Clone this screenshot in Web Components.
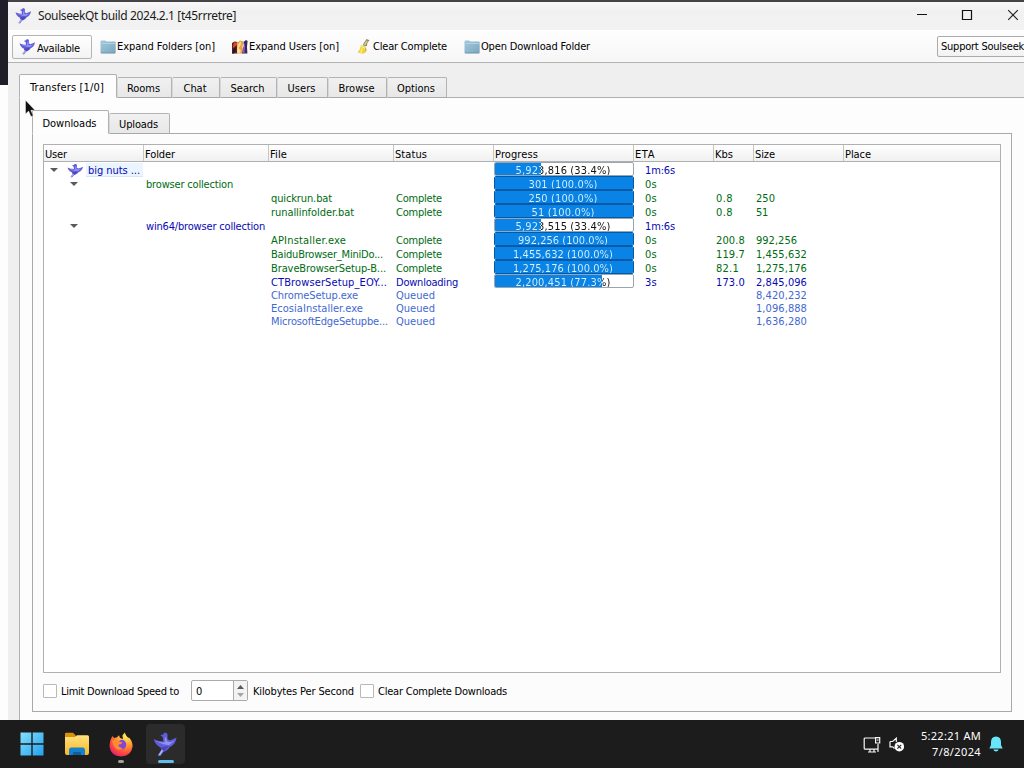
<!DOCTYPE html>
<html lang="en">
<head>
<meta charset="utf-8">
<title>SoulseekQt</title>
<style>
html,body{margin:0;width:1024px;height:768px;overflow:hidden;background:#fff}
body{font:11px/14px "DejaVu Sans Condensed","DejaVu Sans",sans-serif;font-stretch:condensed;color:#000}
</style>
</head>
<body>
<slsk-desktop></slsk-desktop>
<script>
const define = (name, html, extra) => {
  const t = document.createElement('template');
  t.innerHTML = html;
  customElements.define(name, class extends HTMLElement {
    constructor() {
      super();
      this.attachShadow({mode: 'open'}).append(t.content.cloneNode(true));
    }
    connectedCallback() { if (extra) extra(this, this.shadowRoot); }
  });
};

// Text run tracked to a given width
define('fit-text', `<style>:host{display:inline-block;white-space:pre;flex:none}</style><slot></slot>`, el => {
  const w = +el.getAttribute('w');
  const n = el.textContent.length;
  if (w && n) {
    el.style.letterSpacing = '0';
    const now = el.getBoundingClientRect().width;
    if (now) el.style.letterSpacing = ((w - now) / n).toFixed(4) + 'px';
  }
});

const BIRD = `<path d="M.5 5.2C3 6.6 5 6.7 7 6.8L6.6 3.9 4.9 2.9 6.8 2.3C7.3.9 9.5.7 9.9 2.3L9.8 5.3 11.4 6.2C13 5.4 14.7 5 16 4.2 15.5 7.6 13.7 9.6 11.4 10.4 10.6 12.3 8.5 13 7.2 13.6L5 16.4 3.4 16 5.8 12.6C5.6 11.4 5.3 10.8 4.5 10.4 2.9 9.5 1 8 .5 5.2Z" fill="#5f5bdb"/><path d="M1.5 6.5 7 8.7 11 9.3 15 6 12 7.3 9.4 6.7 9 3.5 8 5 8 7.6 5 7.2Z" fill="#8e92f2"/><path d="M5 11 8 10.3 11 9.8 8 12.6 6.3 13.2Z" fill="#4a45b0"/><path d="M6 12 7 13 4.8 16 3.5 15.8Z" fill="#a9acf3"/>`;
const ICONS = {
  bird: ['0 0 17 17', BIRD],
  folder: ['0 0 16 14', `<defs><linearGradient id="g" x2="1" y2="1"><stop stop-color="#a3c8dc"/><stop offset="1" stop-color="#7ba6bf"/></linearGradient></defs><path d="M.5 1.5Q.5.5 1.5.5H5L6.5 1.5H15Q15.7 1.5 15.7 2.5V12.5Q15.7 13.5 14.7 13.5H1.5Q.5 13.5.5 12.5Z" fill="url(#g)"/><path d="M2 3H15V4H2Z" fill="#b3d3e3"/><path d="M1 12.8H15" stroke="#6a98b2" stroke-width=".8"/>`],
  users: ['0 0 16 14', `<path d="M0 3 2.5 1.5 5.5 2 5 7 6 13.5H0Z" fill="#5d211b"/><path d="M2 2.4H5V5L1 8V6Z" fill="#d44d28"/><path d="M1 9 4 7 4 11 2 13.5H0Z" fill="#2a1830"/><path d="M5.5 2.5 8 .5 11.5 1.5 10.5 7 11 13.5H5Z" fill="#eda243"/><path d="M7 3 9 1.5 8.6 5 6.5 8 9 11 7 13.5H5.2V9Z" fill="#ffe19a"/><path d="M11.5 2 14 0 15.6 1 15 7 15.4 13.5H10L12 7Z" fill="#33256e"/><path d="M10.5 9 13 3 13 8 12.5 13 10.5 13.5Z" fill="#8a5aa8"/>`],
  broom: ['0 0 13 16', `<path d="M9.5 0 12.5 1.2 10.3 4.3 10 7.5 6.8 8 6 5.7Z" fill="#8d8d5e"/><path d="M9.3 1.8 10.6 2.2 8.3 7 6.8 6.3Z" fill="#d7cf8d"/><path d="M4 6.5 9.2 9 8.7 14.5 6 15.8.5 14.5Q3.5 11.5 4 6.5Z" fill="#eed33d"/><path d="M4.5 8 8 10M3 13 5 14.5M5 10 4.5 13" stroke="#fff5a0" fill="none"/><path d="M8 9.5 9.5 11 9 14Z" fill="#b4992d"/>`],
  min: ['0 0 12 12', `<path d="M1 5.5H11" stroke="#111" fill="none"/>`],
  max: ['0 0 12 12', `<path d="M1.5 1.5H10.5V10.5H1.5Z" stroke="#111" stroke-width="1.2" fill="none"/>`],
  close: ['0 0 12 12', `<path d="M1.2 1.2 10.8 10.8M10.8 1.2 1.2 10.8" stroke="#222" stroke-width="1.15" fill="none"/>`],
  down: ['0 0 8 4', `<path d="M0 0H8L4 4Z" fill="#5a5a5a"/>`],
  pointer: ['0 0 10 17', `<path d="M.5.3V14L3.6 11 6 16.5 8.2 15.5 5.8 10.3H10Z" fill="#111" stroke="#fff" stroke-width=".4"/>`],
  win: ['0 0 24 24', `<defs><linearGradient id="h" gradientUnits="userSpaceOnUse" x1="0" y1="0" x2="24" y2="24"><stop stop-color="#86e2fd"/><stop offset="1" stop-color="#219fed"/></linearGradient></defs><path d="M.5.5H11.3V11.3H.5ZM12.7.5H23.5V11.3H12.7ZM.5 12.7H11.3V23.5H.5ZM12.7 12.7H23.5V23.5H12.7Z" fill="url(#h)"/>`],
  explorer: ['0 0 26 24', `<defs><linearGradient id="g" x2="0" y2="1"><stop stop-color="#ffe17c"/><stop offset="1" stop-color="#f7b72c"/></linearGradient></defs><path d="M1 2Q1 .7 2.3.7H9L12 3.7V8H1Z" fill="#d8920e"/><path d="M1 5H11L13 3.2H23.5Q25 3.2 25 4.7V21Q25 23 23 23H3Q1 23 1 21Z" fill="url(#g)"/><path d="M5 23V18Q5 15.5 7.5 15.5H18.5Q21 15.5 21 18V23Z" fill="#1681cb"/><path d="M9 23V21Q9 20 10 20H16Q17 20 17 21V23Z" fill="#105c9c"/>`],
  firefox: ['0 0 24 25', `<defs><radialGradient id="g" cx=".72" cy=".15" r=".95"><stop stop-color="#fff15a"/><stop offset=".4" stop-color="#ff9f31"/><stop offset=".75" stop-color="#ff493c"/><stop offset="1" stop-color="#df1c77"/></radialGradient></defs><path d="M3.5 4 5 6 8 5.3 10 3.2 11 6 14 7 13.4 3.5 15.7.5Q17 4 19 5.5L20.5 6Q24 10 23.5 15 22 24 12 24.5 2 24 .6 15 .3 9 3.5 4Z" fill="url(#g)"/><path d="M8.2 10 11 8.6Q13 7 15.5 8.7 18 11 17 14.5 15 18.5 11.5 17.5 8 17 7.7 13Z" fill="#8446d4"/><path d="M3 9Q6 7 9 9L13.5 10.4Q12 12.7 9.5 12.6 9.5 16 14 16.2 10 19.5 6.2 16Q4 13 3 9Z" fill="#ff8b35"/>`],
  net: ['0 0 18 17', `<path d="M12 2H2.2Q1.2 2 1.2 3V12.3Q1.2 13.2 2.2 13.2H15M5 16H13M7 13V16M11 13V16M15 8V16" fill="none" stroke="#f5f5f5" stroke-width="1.2"/><path d="M12.6 1.6H16.7V7H12.6ZM13.8 4H15.7" fill="none" stroke="#f5f5f5" stroke-width="1.2"/>`],
  mute: ['0 0 16 15', `<path d="M1 4.5H3.6L7.3 1.2V5M1 4.5V9.8H3.7L5.5 11.5" fill="none" stroke="#f5f5f5" stroke-width="1.2"/><circle cx="10.3" cy="9.7" r="4.8" fill="#fff"/><path d="M8.4 7.8 12.2 11.6M12.2 7.8 8.4 11.6" stroke="#222" stroke-width="1.1"/>`],
  bell: ['0 0 14 16', `<path d="M7 .5Q12 .8 12 6V9L13.7 12.5H.3L2 9V6Q2 .8 7 .5Z" fill="#69e6fb"/><path d="M4.3 13.5H9.7Q9 15.5 7 15.5 5 15.5 4.3 13.5Z" fill="#69e6fb"/>`]
};
define('ui-icon', `<style>:host{display:block;flex:none}svg{display:block;width:100%;height:100%}</style>`, (el, root) => {
  const [box, body] = ICONS[el.getAttribute('name')];
  el.style.width = el.getAttribute('w') + 'px';
  el.style.height = el.getAttribute('h') + 'px';
  root.innerHTML += `<svg viewBox="${box}" preserveAspectRatio="none">${body}</svg>`;
});

define('title-bar', `<style>
:host{display:flex;align-items:center;height:28px;box-sizing:border-box;background:linear-gradient(#f8f8f8,#f2f1f2 30%,#f2f2f2);padding:0 0 2px 7px;font:12px/16px "Noto Sans","Open Sans",sans-serif;color:#1b1b1b}
.name{margin-left:6px;flex:none;width:880px;padding-top:1px}
</style><ui-icon name="bird" w="17" h="17"></ui-icon><div class="name"><fit-text w="198">SoulseekQt build 2024.2.1 [t45rrretre]</fit-text></div>
<ui-icon name="min" w="12" h="12" style="margin-left:-2px"></ui-icon><ui-icon name="max" w="12" h="12" style="margin-left:33px"></ui-icon><ui-icon name="close" w="12" h="12" style="margin-left:34px"></ui-icon>`);

define('tool-bar', `<style>
:host{display:flex;align-items:center;height:32px;background:linear-gradient(#fefefe,#f6f6f6);border-bottom:1px solid #b2b2b2;box-shadow:inset 0 -1px #f9f9f9;padding-left:4px;overflow:hidden}
.on{box-sizing:border-box;display:flex;align-items:center;width:80px;height:24px;border:1px solid #b4b4b4;border-radius:2px;background:linear-gradient(#fff,#f3f3f3);padding-left:6px;margin-top:2px;flex:none}
.on fit-text{margin:3px 0 0 1px}
.on ui-icon{margin-top:-1px}
.i{display:flex;align-items:center;gap:1px;flex:none;padding-top:1px}
.i fit-text{padding-top:1px}
.sup{box-sizing:border-box;width:110px;height:21px;border:1px solid #aaa;border-radius:2px;background:linear-gradient(#fff,#f2f2f2);padding:3px 0 0 3px;flex:none}
</style>
<div class="on"><ui-icon name="bird" w="17" h="17"></ui-icon><fit-text w="43">Available</fit-text></div>
<div class="i" style="width:132px;margin-left:8px"><ui-icon name="folder" w="16" h="14"></ui-icon><fit-text w="98">Expand Folders [on]</fit-text></div>
<div class="i" style="width:125px"><ui-icon name="users" w="16" h="14"></ui-icon><fit-text w="90">Expand Users [on]</fit-text></div>
<div class="i" style="width:107px;gap:3px"><ui-icon name="broom" w="13" h="15"></ui-icon><fit-text w="74">Clear Complete</fit-text></div>
<div class="i" style="width:473px"><ui-icon name="folder" w="16" h="14"></ui-icon><fit-text w="109">Open Download Folder</fit-text></div>
<div class="sup"><fit-text w="83">Support Soulseek</fit-text></div>`);

define('tab-strip', `<style>
:host{display:flex;align-items:flex-end;position:relative;z-index:1;margin-bottom:-1px;flex:none}
</style><slot></slot>`);
define('tab-item', `<style>
:host{display:flex;flex:none;justify-content:center;align-items:center;box-sizing:border-box;width:var(--w);height:21px;border:1px solid #b3b3b3;border-left-color:#d8d8d8;border-bottom:1px solid #a8a8a8;background:linear-gradient(#f1f1f1,#e7e7e7);border-radius:2px 2px 0 0;padding:3px 2px 0 0}
:host([on]){height:24px;background:#fdfdfd;border-color:#b0b0b0;border-bottom-color:#fdfdfd;padding:3px 2px 0 0}
</style><slot></slot>`);

define('progress-cell', `<style>
:host{display:block;box-sizing:border-box;width:140px;height:14px;border:1px solid #9aa5ae;border-radius:2px;background:#fff;overflow:hidden}
.bar{height:12px;background:linear-gradient(90deg,#0a83e6 var(--x),transparent var(--x))}
:host([full]){border-color:#0859a5}
.t{display:block;text-align:center;line-height:15px;height:14px;color:transparent;padding-right:2px;-webkit-background-clip:text;background-clip:text;background-image:linear-gradient(90deg,#d8f3ff var(--x),#111 var(--x))}
</style><div class="bar"><div class="t"></div></div>`, (el, root) => {
  const p = el.getAttribute('p');
  const t = root.querySelector('.t');
  el.style.setProperty('--x', p + '%');
  if (p === '100.0') el.toggleAttribute('full', true);
  t.textContent = `${el.getAttribute('n')} (${p}%)`;
  const w = +el.getAttribute('w');
  const r = document.createRange();
  r.selectNodeContents(t);
  t.style.letterSpacing = ((w - r.getBoundingClientRect().width) / t.textContent.length).toFixed(4) + 'px';
});

// user, folder, file, status, [count, percent, width], eta, kbs, size, colour
const G = '#006b12', B = '#0808b4', Q = '#3f68d2';
const ROWS = [
  ['big nuts ...|52','','','',['5,923,816','33.4',95],'1m:6s|30','','',B],
  ['>','browser collection|87','','',['301','100.0',69],'0s|12','','',G],
  ['','','quickrun.bat|61','Complete|46',['250','100.0',69],'0s|12','0.8|17','250|19',G],
  ['','','runallinfolder.bat|83','Complete|46',['51','100.0',63],'0s|12','0.8|17','51|12',G],
  ['>','win64/browser collection|119','','',['5,923,515','33.4',95],'1m:6s|30','','',B],
  ['','','APInstaller.exe|75','Complete|46',['992,256','100.0',90],'0s|12','200.8|29','992,256|41',G],
  ['','','BaiduBrowser_MiniDo...|112','Complete|46',['1,455,632','100.0',100],'0s|12','119.7|29','1,455,632|51',G],
  ['','','BraveBrowserSetup-B...|115','Complete|46',['1,275,176','100.0',100],'0s|12','82.1|23','1,275,176|51',G],
  ['','','CTBrowserSetup_EOY...|116','Downloading|62',['2,200,451','77.3',95],'3s|12','173.0|29','2,845,096|51',B],
  ['','','ChromeSetup.exe|87','Queued|39',null,'','','8,420,232|51',Q],
  ['','','EcosiaInstaller.exe|92','Queued|39',null,'','','1,096,888|51',Q],
  ['','','MicrosoftEdgeSetupbe...|117','Queued|39',null,'','','1,636,280|51',Q]
];
const fit = s => { if (!s) return ''; const [a, w] = s.split('|'); return `<fit-text w="${w}">${a}</fit-text>`; };
const user = s => s === '>' ? `<ui-icon name="down" w="8" h="4" style="margin:4px 0 0 26px"></ui-icon>`
  : s ? `<ui-icon name="down" w="8" h="4" style="margin:4px 0 0 6px"></ui-icon><ui-icon name="bird" w="17" h="15" style="margin:-1px 0 0 9px"></ui-icon><span class="sel">${fit(s)}</span>` : '';
const COLS = ['User|22','Folder|30','File|17','Status|32','Progress|43','ETA|20','Kbs|18','Size|20','Place|26'];

define('transfer-tree', `<style>
:host{display:block;box-sizing:border-box;height:529px;border:1px solid #b0b0b0;background:#fff;flex:none}
.head,.row{display:grid;grid-template-columns:99px 125px 125px 100px 140px 80px 40px 90px 1fr}
.head{height:16px;background:linear-gradient(#fff,#f0f0f0);border-bottom:1px solid #b0b0b0}
.head div{box-sizing:border-box;border-left:1px solid #c6c6c6;padding:3px 0 0 1px;height:16px}
.head div:first-child{border:0}
.row{height:14px;line-height:14px}
.row.q{height:13px;line-height:13px}
.row>div{padding:2px 0 0 3px;white-space:nowrap;height:14px;box-sizing:border-box}
.row.q>div{padding-top:1px}
.row>div:first-child{display:flex;padding-left:0}
.row>.p{padding:0 0 0 1px}
.row>.e{padding-left:12px}
.sel{background:#eaf5ff;margin:-1px 0 0 2px;padding:1px 0 0 2px;height:13px;flex:1;overflow:hidden;box-shadow:inset 0 -1px #d3e8fb}
</style>
<div class="head">${COLS.map(c => `<div>${fit(c)}</div>`).join('')}</div>
${ROWS.map(r => `<div class="row${r[4] ? '' : ' q'}" style="color:${r[8]}"><div>${user(r[0])}</div><div>${fit(r[1])}</div><div>${fit(r[2])}</div><div>${fit(r[3])}</div><div class="p">${r[4] ? `<progress-cell n="${r[4][0]}" p="${r[4][1]}" w="${r[4][2]}"></progress-cell>` : ''}</div><div class="e">${fit(r[5])}</div><div>${fit(r[6])}</div><div>${fit(r[7])}</div><div></div></div>`).join('')}`);

define('limit-bar', `<style>
:host{display:flex;align-items:center;height:22px;margin-top:7px}
:host>fit-text,fit-text{padding-top:2px}
.cb{box-sizing:border-box;width:14px;height:14px;border:1px solid #b9b9b9;background:#fff;border-radius:1px;flex:none;margin:-1px 4px 0 0}
.spin{box-sizing:border-box;display:flex;width:57px;height:21px;border:1px solid #ababab;border-radius:2px;background:#fff;margin:-1px 5px 0 12px}
.val{flex:1;padding:4px 0 0 4px}
.btns{width:13px;border-left:1px solid #ababab;background:#f3f3f3;display:flex;flex-direction:column;justify-content:center;align-items:center;gap:4px}
</style>
<div class="cb"></div><fit-text w="118">Limit Download Speed to</fit-text>
<div class="spin"><div class="val">0</div><div class="btns"><ui-icon name="down" w="7" h="4" style="transform:scaleY(-1)"></ui-icon><ui-icon name="down" w="7" h="4" style="opacity:.5"></ui-icon></div></div>
<fit-text w="101" style="margin-right:6px">Kilobytes Per Second</fit-text><div class="cb"></div><fit-text w="129">Clear Complete Downloads</fit-text>`);

define('transfers-pane', `<style>
:host{display:flex;flex-direction:column;box-sizing:border-box;height:640px;width:1010px;border:1px solid #b0b0b0;background:#fdfdfd;padding:12px 0 0 12px}
.pane{box-sizing:border-box;width:980px;height:579px;border:1px solid #a9a9a9;background:#fcfcfc;padding:10px 10px 0 10px;flex:none}
</style>
<tab-strip><tab-item on style="--w:77px"><fit-text w="54">Downloads</fit-text></tab-item><tab-item style="--w:61px"><fit-text w="39">Uploads</fit-text></tab-item></tab-strip>
<div class="pane"><transfer-tree></transfer-tree><limit-bar></limit-bar></div>`);

define('app-window', `<style>
:host{display:block;box-sizing:border-box;width:1016px;height:720px;border-top:2px solid #454348;overflow:hidden;background:#efefef}
.main{padding:11px 0 0 11px}
</style>
<title-bar></title-bar><tool-bar></tool-bar>
<div class="main"><tab-strip>
<tab-item on style="--w:98px"><fit-text w="74">Transfers [1/0]</fit-text></tab-item>
<tab-item style="--w:55px"><fit-text w="33">Rooms</fit-text></tab-item>
<tab-item style="--w:48px"><fit-text w="23">Chat</fit-text></tab-item>
<tab-item style="--w:57px"><fit-text w="34">Search</fit-text></tab-item>
<tab-item style="--w:51px"><fit-text w="28">Users</fit-text></tab-item>
<tab-item style="--w:59px"><fit-text w="36">Browse</fit-text></tab-item>
<tab-item style="--w:60px"><fit-text w="38">Options</fit-text></tab-item>
</tab-strip><transfers-pane></transfers-pane></div>`);

define('task-bar', `<style>
:host{display:flex;align-items:center;height:48px;background:#1c1c1c;color:#fff;box-sizing:border-box;padding-left:20px}
.act{box-sizing:border-box;width:39px;height:40px;border-radius:4px;background:#2b2b2c;margin-left:13px;display:flex;flex-direction:column;align-items:center;padding-top:7px}
.act i{width:16px;height:3px;border-radius:2px;background:#61bdec;margin-top:3px}
.ff{display:flex;flex-direction:column;align-items:center;margin-left:19px;padding-top:7px}
.ff i{width:6px;height:3px;border-radius:2px;background:#a0a0a0;margin-top:3px}
.clock{width:70px;text-align:right;font:11px/16px "Noto Sans","Open Sans",sans-serif;margin-left:6px}
.clock fit-text{display:block;width:max-content;margin-left:auto}
</style>
<ui-icon name="win" w="24" h="24"></ui-icon><ui-icon name="explorer" w="26" h="24" style="margin-left:20px"></ui-icon>
<div class="ff"><ui-icon name="firefox" w="24" h="25"></ui-icon><i></i></div>
<div class="act"><ui-icon name="bird" w="25" h="26"></ui-icon><i></i></div>
<ui-icon name="net" w="18" h="17" style="margin-left:678px"></ui-icon><ui-icon name="mute" w="16" h="15" style="margin-left:8px"></ui-icon>
<div class="clock"><fit-text w="60">5:22:21 AM</fit-text><fit-text w="49">7/8/2024</fit-text></div>
<ui-icon name="bell" w="14" h="16" style="margin-left:8px"></ui-icon>`);

define('slsk-desktop', `<style>
:host{display:grid;grid-template-columns:8px 1016px;grid-template-rows:720px 48px;width:1024px;height:768px;position:relative;overflow:hidden}
.side{background:linear-gradient(#201e29 85px,#fdfdfd 85px)}
task-bar{grid-column:1/3}
.cur{position:absolute;left:25px;top:100px;z-index:5}
</style><div class="side"></div><app-window></app-window><task-bar></task-bar><ui-icon class="cur" name="pointer" w="10" h="17"></ui-icon>`);
</script>
</body>
</html>
